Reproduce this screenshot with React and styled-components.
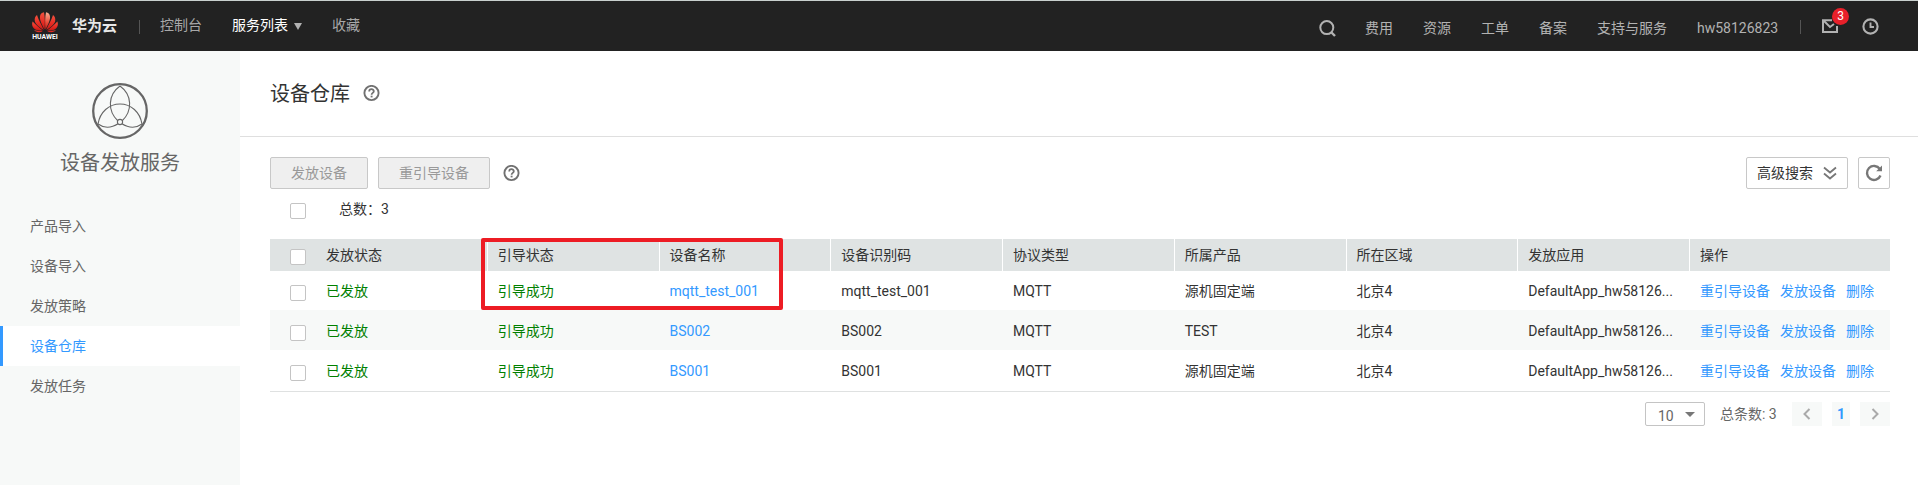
import React from "react";
import styled, { createGlobalStyle } from "styled-components";

const Global = createGlobalStyle`
  * { box-sizing: border-box; }
  body {
    margin: 0;
    background: #fff;
    font-family: Roboto, "Noto Sans CJK SC", sans-serif;
    font-size: 14px;
    line-height: 20px;
    color: #333;
  }
`;

const Page = styled.div`
  height: 485px;
  display: flex;
  flex-direction: column;
  overflow: hidden;
`;

const Header = styled.header`
  height: 51px;
  flex: none;
  display: flex;
  align-items: flex-start;
  background: #222;
  border-top: 1px solid #c9d0ce;
  color: #b2b2b2;
  padding-left: 31px;
  white-space: nowrap;
`;

const Brand = styled.div`
  display: flex;
  align-items: flex-start;
  width: 108px;
  padding-top: 10px;
`;

const LogoBox = styled.div`
  width: 28px;
  margin-right: 13px;
  svg { display: block; }
`;

const BrandName = styled.span`
  font-size: 15px;
  font-weight: 700;
  color: #e8e8e8;
  margin-top: 5px;
`;

const HeaderDivider = styled.i`
  width: 1px;
  height: 14px;
  background: #555;
  margin: ${(p) => p.$margin};
`;

const LeftItem = styled.span`
  margin-top: 14px;
  margin-left: ${(p) => p.$gap}px;
  color: ${(p) => (p.$active ? "#fff" : "#a8a8a8")};
  display: inline-flex;
  align-items: center;
`;

const Caret = styled.i`
  border: ${(p) => p.$size}px solid transparent;
  border-top: ${(p) => p.$h}px solid ${(p) => p.$color};
  border-bottom: 0;
  margin: ${(p) => p.$top || 0}px 0 0 ${(p) => p.$gap}px;
`;

const RightNav = styled.nav`
  margin-left: auto;
  width: 599px;
  display: flex;
  align-items: flex-start;
`;

const RightItem = styled.span`
  margin-top: 17px;
  margin-left: 30px;
  &:nth-of-type(2) { margin-left: 29px; }
`;

const IconSlot = styled.span`
  display: block;
  position: relative;
  margin-top: ${(p) => p.$top}px;
  margin-left: ${(p) => p.$left || 0}px;
  svg { display: block; }
`;

const Badge = styled.b`
  position: absolute;
  left: 10px;
  top: -11px;
  width: 17px;
  height: 17px;
  border-radius: 50%;
  background: #e8202a;
  color: #fff;
  font-size: 12px;
  font-weight: 400;
  line-height: 17px;
  text-align: center;
`;

const Body = styled.div`
  flex: 1;
  display: flex;
`;

const Sidebar = styled.aside`
  width: 240px;
  flex: none;
  background: #f7f9f8;
  color: #666;
`;

const Service = styled.div`
  height: 155px;
  padding-top: 32px;
  display: flex;
  flex-direction: column;
  align-items: center;
`;

const ServiceName = styled.div`
  font-size: 20px;
  line-height: 28px;
  margin-top: 10px;
`;

const MenuItem = styled.div`
  height: 40px;
  line-height: 40px;
  padding-left: 27px;
  border-left: 3px solid ${(p) => (p.$active ? "#3399ff" : "transparent")};
  background: ${(p) => (p.$active ? "#fff" : "transparent")};
  color: ${(p) => (p.$active ? "#3399ff" : "#666")};
`;

const Main = styled.main`
  flex: 1;
  min-width: 0;
`;

const TitleBar = styled.div`
  height: 86px;
  padding: 29px 0 0 30px;
  border-bottom: 1px solid #dfdfdf;
  display: flex;
  align-items: flex-start;
`;

const Title = styled.h1`
  margin: 0 13px 0 0;
  font-size: 20px;
  font-weight: 400;
  line-height: 28px;
`;

const Content = styled.div`
  padding: 20px 28px 0 30px;
`;

const Toolbar = styled.div`
  display: flex;
  height: 32px;
`;

const Button = styled.button`
  height: 32px;
  width: ${(p) => p.$width}px;
  margin: 0 10px 0 0;
  padding: 0;
  display: flex;
  align-items: center;
  justify-content: center;
  gap: 10px;
  font: inherit;
  border: 1px solid #c8c8c8;
  border-radius: 2px;
  background: ${(p) => (p.$disabled ? "#efefef" : "#fff")};
  color: ${(p) => (p.$disabled ? "#999" : "#333")};
  &:last-child { margin-right: 0; }
`;

const ToolbarRight = styled.div`
  margin-left: auto;
  display: flex;
`;

const Summary = styled.div`
  height: 50px;
  display: flex;
  align-items: flex-start;
  padding: 10px 0 0 20px;
`;

const Checkbox = styled.span`
  display: block;
  flex: none;
  width: 16px;
  height: 16px;
  margin-top: ${(p) => p.$top || 0}px;
  border: 1px solid #c4c4c4;
  border-radius: 2px;
  background: #fff;
`;

const Total = styled.span`
  margin-left: 33px;
`;

const TableArea = styled.div`
  position: relative;
`;

const Grid = styled.div`
  display: grid;
  grid-template-columns: 46px repeat(8, 171.75px) 200px;
`;

const HeadRow = styled(Grid)`
  height: 32px;
  background: #dfe3e3;
`;

const HeadCell = styled.div`
  line-height: 32px;
  margin-left: ${(p) => (p.$first ? 0 : -0.8)}px;
  padding-left: ${(p) => (p.$first ? 10 : 9.8)}px;
  border-left: ${(p) => (p.$first ? "0" : "1px solid #fff")};
`;

const Row = styled(Grid)`
  height: ${(p) => p.$height}px;
  background: ${(p) => (p.$striped ? "#f7f9f8" : "#fff")};
  &:last-of-type { border-bottom: 1px solid #dfe1e1; }
`;

const CheckCell = styled.div`
  padding-left: 20px;
`;

const Cell = styled.div`
  padding-left: 10px;
  line-height: ${(p) => p.$line}px;
  white-space: nowrap;
  color: ${(p) => p.$color || "#333"};
`;

const Actions = styled(Cell)`
  display: flex;
  gap: 10px;
`;

const Highlight = styled.div`
  position: absolute;
  left: 211px;
  top: -1px;
  width: 302px;
  height: 72px;
  border: 4px solid #ed1c24;
  border-radius: 2px;
`;

const Pager = styled.div`
  display: flex;
  justify-content: flex-end;
  height: 24px;
  margin-top: 10px;
  color: #666;
`;

const PageSize = styled.div`
  width: 60px;
  height: 24px;
  padding: 4px 0 0 12px;
  display: flex;
  align-items: center;
  border: 1px solid #c4c4c4;
  border-radius: 2px;
`;

const PageTotal = styled.span`
  width: 72px;
  line-height: 24px;
  margin-left: 15px;
`;

const PageButton = styled.span`
  width: ${(p) => p.$width}px;
  height: 24px;
  margin-right: 10px;
  display: flex;
  align-items: center;
  justify-content: center;
  background: #f7f9f8;
  color: ${(p) => (p.$current ? "#3399ff" : "#aaa")};
  font-weight: ${(p) => (p.$current ? 700 : 400)};
  &:last-child { margin-right: 0; }
`;

const HelpSlot = styled.span`
  display: block;
  margin-top: ${(p) => p.$top}px;
  margin-left: ${(p) => p.$left || 0}px;
  svg { display: block; }
`;

function HuaweiLogo() {
  return (
    <svg width="28" height="29" viewBox="0 0 28 29">
      <defs>
        <linearGradient id="petal" x1="0" y1="0" x2="0" y2="1">
          <stop offset="0" stopColor="#f2523f" />
          <stop offset="0.6" stopColor="#e62a22" />
          <stop offset="1" stopColor="#c41a15" />
        </linearGradient>
        <linearGradient id="petalLight" x1="0" y1="0" x2="0" y2="1">
          <stop offset="0" stopColor="#fbb497" />
          <stop offset="0.6" stopColor="#ea4a38" />
          <stop offset="1" stopColor="#c41a15" />
        </linearGradient>
      </defs>
      <g fill="url(#petal)">
        <path d="M13.6 18.6C10.6 13 8.6 9 9 5.4 9.200 3 10.800 1.600 13 1.200 14 6 14 12 13.600 18.600Z" />
        <path fill="url(#petalLight)" d="M14.4 18.6C17.4 13 19.4 9 19 5.4 18.8 3 17.2 1.6 15 1.2 14 6 14 12 14.4 18.6Z" />
        <path d="M12.8 18.9C10 17.4 4.8 13.6 3.9 10.4 3.3 8 4 5.6 6 4.1 7.4 8.6 11 15 12.8 18.9Z" />
        <path d="M15.2 18.9C18 17.4 23.2 13.6 24.1 10.4 24.7 8 24 5.6 22 4.1 20.6 8.6 17 15 15.2 18.9Z" />
        <path d="M12 19.4C8.6 19.8 4.6 19.4 2.6 17 1 15 .7 12.6 1.6 10.4 4.8 13.8 9 17.2 12 19.4Z" />
        <path d="M16 19.4C19.4 19.8 23.4 19.4 25.4 17 27 15 27.3 12.6 26.4 10.4 23.2 13.8 19 17.2 16 19.4Z" />
        <path d="M11.8 20.2C9.8 21.6 6.4 22 3 19.2 6 19.8 9 20.2 11.8 20.2Z" />
        <path d="M16.2 20.2C18.2 21.6 21.6 22 25 19.2 22 19.8 19 20.2 16.2 20.2Z" />
      </g>
      <text x="14" y="28.2" textAnchor="middle" textLength="25.5" lengthAdjust="spacingAndGlyphs" fontFamily="Roboto, sans-serif" fontWeight="700" fontSize="7" fill="#fff">
        HUAWEI
      </text>
    </svg>
  );
}

function ServiceIcon() {
  return (
    <svg width="56" height="56" viewBox="0 0 56 56" fill="none" stroke="#666">
      <circle cx="28" cy="28" r="26.8" strokeWidth="2.3" />
      <g strokeWidth="1.1">
        <path d="M28 3C15.500 12 15.500 28 26 38M28 3C40.500 12 40.500 28 30 38" />
        <path d="M6 41C8 29 17 21 28 21C39 21 48 29 50 41" />
        <path d="M6 41C13 46 21 44 26.500 40.500M50 41C43 46 35 44 29.500 40.500" />
        <circle cx="28" cy="39" r="2.600" fill="#f7f9f8" />
      </g>
    </svg>
  );
}

function HelpIcon() {
  return (
    <svg width="17" height="17" viewBox="0 0 17 17" fill="none" stroke="#717171">
      <circle cx="8.500" cy="8" r="7.100" strokeWidth="1.900" />
      <path d="M6.200 6.500C6.200 3.400 10.800 3.500 10.800 6.300C10.800 7.900 8.600 7.900 8.600 9.700" strokeWidth="1.800" />
      <path d="M8.600 10.700V12.400" strokeWidth="1.900" />
    </svg>
  );
}

const columns = ["发放状态", "引导状态", "设备名称", "设备识别码", "协议类型", "所属产品", "所在区域", "发放应用", "操作"];

const devices = [
  { name: "mqtt_test_001", product: "源机固定端", height: 39, line: 41, check: 14 },
  { name: "BS002", product: "TEST", height: 40, line: 42, check: 15 },
  { name: "BS001", product: "源机固定端", height: 42, line: 42, check: 15 },
];

const menu = ["产品导入", "设备导入", "发放策略", "设备仓库", "发放任务"];

export default function App() {
  return (
    <Page>
      <Global />
      <Header>
        <Brand>
          <LogoBox><HuaweiLogo /></LogoBox>
          <BrandName>华为云</BrandName>
        </Brand>
        <HeaderDivider $margin="19px 0 0 0" />
        <LeftItem $gap={20}>控制台</LeftItem>
        <LeftItem $gap={30} $active>
          服务列表
          <Caret $size={4} $h={7} $gap={6} $top={2} $color="#b2b2b2" />
        </LeftItem>
        <LeftItem $gap={30}>收藏</LeftItem>
        <RightNav>
          <IconSlot $top={19}>
            <svg width="17" height="17" viewBox="0 0 17 17" fill="none" stroke="#b2b2b2" strokeWidth="2">
              <circle cx="7.800" cy="7.600" r="6.500" />
              <path d="M12 12L16 16" strokeWidth="2.400" />
            </svg>
          </IconSlot>
          <RightItem>费用</RightItem>
          <RightItem>资源</RightItem>
          <RightItem>工单</RightItem>
          <RightItem>备案</RightItem>
          <RightItem>支持与服务</RightItem>
          <RightItem>hw58126823</RightItem>
          <HeaderDivider $margin="19px 0 0 22px" />
          <IconSlot $top={18} $left={21}>
            <svg width="17" height="15" viewBox="0 0 17 15" fill="none" stroke="#b2b2b2" strokeWidth="2">
              <path d="M10 1.200H1V13H15V7" />
              <path d="M2 2L8 8L12 5" />
            </svg>
            <Badge>3</Badge>
          </IconSlot>
          <IconSlot $top={17} $left={23}>
            <svg width="17" height="17" viewBox="0 0 17 17" fill="none" stroke="#b2b2b2" strokeWidth="2.100">
              <circle cx="8.500" cy="8.500" r="7.100" />
              <path d="M8.500 4.500V9H12" strokeWidth="1.900" />
            </svg>
          </IconSlot>
        </RightNav>
      </Header>
      <Body>
        <Sidebar>
          <Service>
            <ServiceIcon />
            <ServiceName>设备发放服务</ServiceName>
          </Service>
          {menu.map((m) => (
            <MenuItem key={m} $active={m === "设备仓库"}>{m}</MenuItem>
          ))}
        </Sidebar>
        <Main>
          <TitleBar>
            <Title>设备仓库</Title>
            <HelpSlot $top={5}><HelpIcon /></HelpSlot>
          </TitleBar>
          <Content>
            <Toolbar>
              <Button $width={98} $disabled>发放设备</Button>
              <Button $width={112} $disabled>重引导设备</Button>
              <HelpSlot $top={8} $left={3}><HelpIcon /></HelpSlot>
              <ToolbarRight>
                <Button $width={102}>
                  高级搜索
                  <svg width="14" height="14" viewBox="0 0 14 14" fill="none" stroke="#777" strokeWidth="1.800">
                    <path d="M1 1.500L7 6.500L13 1.500M1 7.500L7 12.500L13 7.500" />
                  </svg>
                </Button>
                <Button $width={32}>
                  <svg width="18" height="18" viewBox="0 0 18 18" fill="none" stroke="#777" strokeWidth="2.400">
                    <path d="M15.500 11.500A7 7 0 1 1 14.800 5" />
                    <path d="M17 1.500V7.200H11.200Z" fill="#777" stroke="none" />
                  </svg>
                </Button>
              </ToolbarRight>
            </Toolbar>
            <Summary>
              <Checkbox $top={4} />
              <Total>总数：3</Total>
            </Summary>
            <TableArea>
              <HeadRow>
                <CheckCell><Checkbox $top={10} /></CheckCell>
                {columns.map((c, i) => (
                  <HeadCell key={c} $first={i === 0}>{c}</HeadCell>
                ))}
              </HeadRow>
              {devices.map((d, i) => (
                <Row as="section" key={d.name} $height={d.height} $striped={i === 1}>
                  <CheckCell><Checkbox $top={d.check} /></CheckCell>
                  <Cell $line={d.line} $color="#008000">已发放</Cell>
                  <Cell $line={d.line} $color="#008000">引导成功</Cell>
                  <Cell $line={d.line} $color="#3399ff">{d.name}</Cell>
                  <Cell $line={d.line}>{d.name}</Cell>
                  <Cell $line={d.line}>MQTT</Cell>
                  <Cell $line={d.line}>{d.product}</Cell>
                  <Cell $line={d.line}>北京4</Cell>
                  <Cell $line={d.line}>DefaultApp_hw58126...</Cell>
                  <Actions $line={d.line} $color="#3399ff">
                    <span>重引导设备</span>
                    <span>发放设备</span>
                    <span>删除</span>
                  </Actions>
                </Row>
              ))}
              <Highlight />
            </TableArea>
            <Pager>
              <PageSize>
                10
                <Caret $size={5} $h={5} $gap={11} $top={-3} $color="#777" />
              </PageSize>
              <PageTotal>总条数: 3</PageTotal>
              <PageButton $width={30}>
                <svg width="8" height="12" viewBox="0 0 8 12" fill="none" stroke="#aaa" strokeWidth="2"><path d="M6.500 1L1.500 6L6.500 11" /></svg>
              </PageButton>
              <PageButton $width={18} $current>1</PageButton>
              <PageButton $width={30}>
                <svg width="8" height="12" viewBox="0 0 8 12" fill="none" stroke="#aaa" strokeWidth="2"><path d="M1.500 1L6.500 6L1.500 11" /></svg>
              </PageButton>
            </Pager>
          </Content>
        </Main>
      </Body>
    </Page>
  );
}
